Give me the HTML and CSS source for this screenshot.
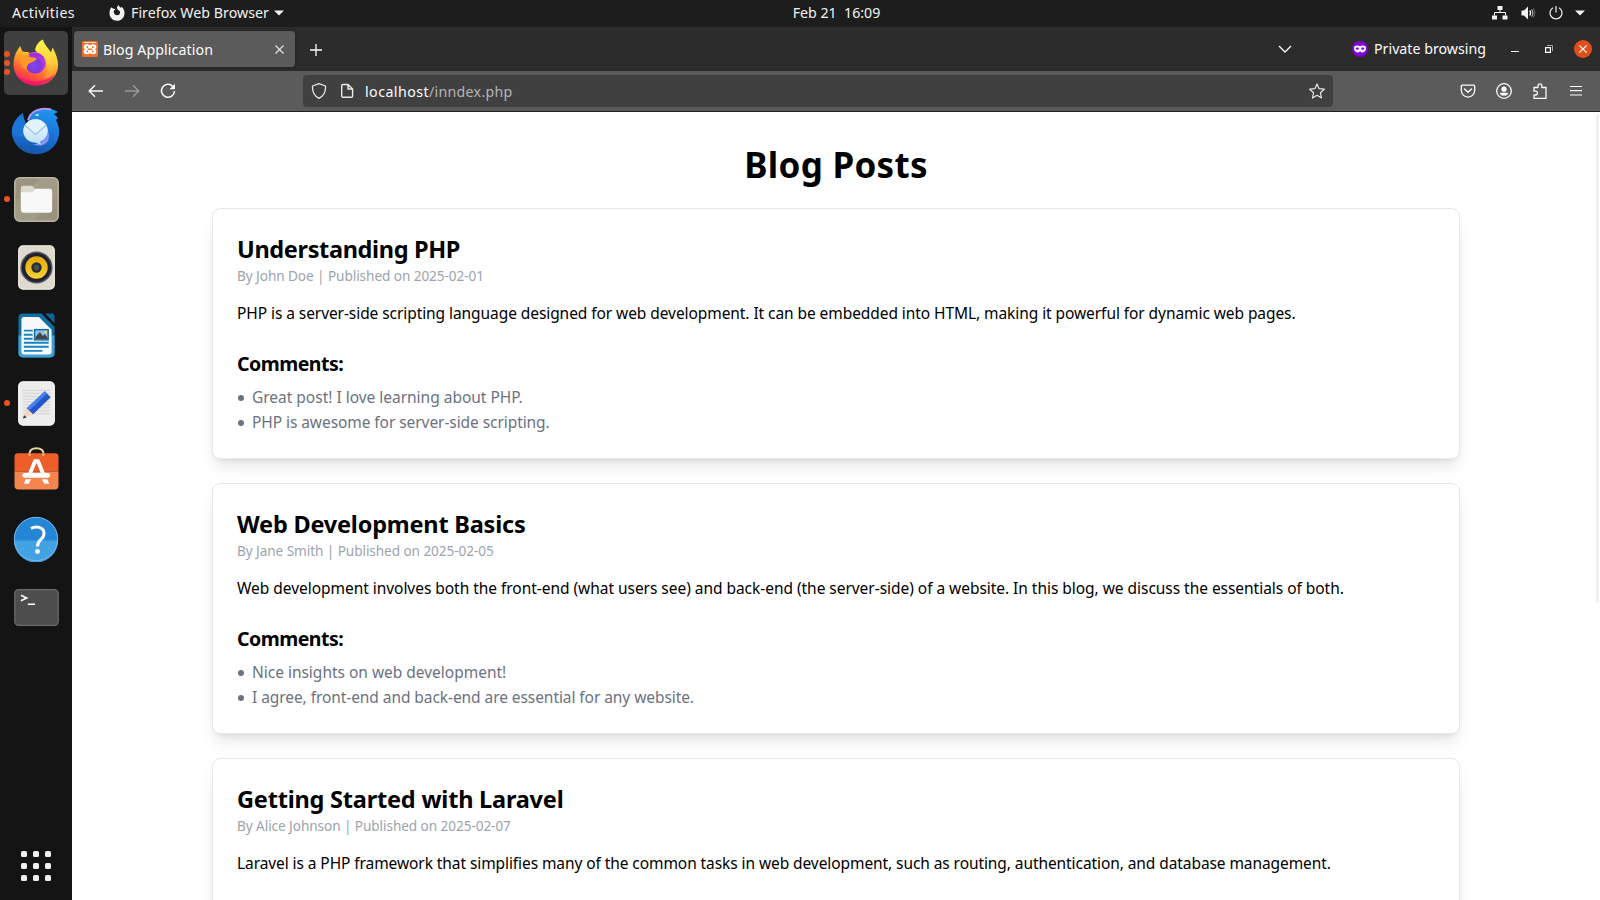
FILE: index.html
```html
<!DOCTYPE html>
<html lang="en">
<head>
<meta charset="utf-8">
<title>Blog Application</title>
<link rel="stylesheet" href="styles.css">
</head>
<body>
<div class="desktop">
  <header class="topbar">
    <div class="topbar-left">
      <span class="activities">Activities</span>
      <svg class="app-icon" width="16" height="16" viewBox="0 0 16 16"><path fill="#f2f2f2" d="M2.2 2.2C3 3 3.900 3.500 5 3.700C6 3.800 6.300 4.200 6.200 4.700L4.900 5.600C4.200 7.500 5.500 10.300 8 10.300C10.300 10.300 11.400 8.500 11 6.700C10.800 5.500 9 5.500 8.200 3.800C7.800 2.500 8.300 1.200 9.500 0C10 1.500 11 2 12 3L12.500 1.800C14.500 3.500 15.500 5.500 15.500 8.200C15.500 12.500 12.200 15.800 8 15.800C3.800 15.800.5 12.500.5 8.300C.5 6 1 4 2.200 2.200Z"/></svg>
      <span class="app-name">Firefox Web Browser</span>
      <svg width="10" height="6" viewBox="0 0 10 6"><path fill="#f2f2f2" d="M0 .5H10L5 5.500Z"/></svg>
    </div>
    <div class="clock">Feb 21&nbsp; 16:09</div>
    <div class="topbar-right">
      <svg width="16" height="14" viewBox="0 0 16 14"><path fill="#f2f2f2" d="M5.500 0h5v4h-5zM0 9.500h5V13.500H0zM10.500 9.500h5V13.500h-5z"/><path fill="none" stroke="#f2f2f2" d="M8 4v2.500M2.500 9.500v-3h11v3"/></svg>
      <svg width="16" height="14" viewBox="0 0 16 14"><path fill="#f2f2f2" d="M.5 4.500H3L7 .5v13L3 9.500H.5z"/><path fill="none" stroke="#f2f2f2" stroke-width="1.300" d="M8.700 4.500q1.800 2.500 0 5"/><path fill="none" stroke="#aaa" stroke-width="1.200" d="M10.500 3.300q2.800 3.700 0 7.400"/><path fill="none" stroke="#666" d="M12.500 2.300q3 4.700 0 9.400"/></svg>
      <svg width="14" height="14" viewBox="0 0 14 14"><path fill="none" stroke="#f2f2f2" stroke-width="1.200" d="M4 1.700a6 6 0 1 0 6 0M7 0v6.500"/></svg>
      <svg width="10" height="6" viewBox="0 0 10 6"><path fill="#f2f2f2" d="M0 .5H10L5 5.500Z"/></svg>
    </div>
  </header>

  <nav class="dock">
    <div class="dock-item active"><i class="dots three"><b></b><b></b><b></b></i>
      <svg class="firefox" width="46" height="47" viewBox="0 0 46 47">
        <defs>
          <linearGradient id="ffBody" x1=".75" y1=".1" x2=".3" y2="1"><stop offset="0" stop-color="#ffe83f"/><stop offset=".35" stop-color="#ffac2b"/><stop offset=".7" stop-color="#ff5b36"/><stop offset="1" stop-color="#f5156c"/></linearGradient>
          <radialGradient id="ffGlobe" cx=".4" cy=".6"><stop offset="0" stop-color="#7a4cf0"/><stop offset=".7" stop-color="#8135d8"/><stop offset="1" stop-color="#b23ae0"/></radialGradient>
          <linearGradient id="ffFlame" x1=".5" y1="0" x2=".6" y2="1"><stop offset="0" stop-color="#fff34f"/><stop offset=".6" stop-color="#ffcf3a"/><stop offset="1" stop-color="#ff8a30"/></linearGradient>
        </defs>
        <path fill="url(#ffBody)" d="M4 12C5 10 6 9 7 7L9.500 12.500L14 13L22 12L36 12C43 14 45 20 45 26C45 38 35 46.500 23 46.500C10 46.500.5 37 .5 25C.5 20 2 15 4 12Z"/>
        <path fill="#ee1470" opacity=".75" d="M2 34C9 44 31 46 42 35C36 49 10 51 2 34Z"/>
        <path fill="url(#ffFlame)" d="M30 .5C31 6 36 9 38 14L39.500 8.500C44 16 46 24 43 31C40 37 36 39 30 39C35 36 36 28 32 21C29 16 23 14 22 11C23 6 26 2 30 .5Z"/>
        <path fill="#404040" d="M14.500 12.300C17 11.300 20 11 22.300 11.500L24 13C20 13 18 13.500 16.500 14.500z"/>
        <circle cx="22.500" cy="24.500" r="10.300" fill="url(#ffGlobe)"/>
        <path fill="#a52be0" d="M15 16C20 11 28 13 32 20C28 17 24 17 21 18Z"/>
        <path fill="#ff9a26" d="M5 17C9 15 13 15.500 17 18L23.500 19C23.500 22 20 22.500 17 24C14 25.500 13.500 28 13.500 31C9 29 7 24 7 20Z"/>
      </svg>
    </div>
    <div class="dock-item">
      <svg class="thunderbird" width="49" height="48" viewBox="0 0 49 48">
        <defs><linearGradient id="tbBody" x1=".7" y1="0" x2=".5" y2="1"><stop offset="0" stop-color="#2196ef"/><stop offset=".6" stop-color="#1a70d6"/><stop offset="1" stop-color="#1457a8"/></linearGradient>
        <linearGradient id="tbMail" x1=".5" y1="0" x2=".5" y2="1"><stop offset="0" stop-color="#f2faff"/><stop offset="1" stop-color="#bfe3fb"/></linearGradient></defs>
        <path fill="#1b76d6" d="M12 6C5 10 0 19 .8 27C2 33 8 38 14 36L15 18C14 13 12 10 12 6Z"/>
        <path fill="url(#tbBody)" d="M17 13C19 5 27 1 34 1C39 1 42 2.500 47 5L43 7L47 11L45 13C50 22 49 32 43 39C35 49 18 50 8 41C3 36 1 30 1 25C5 31 10 31 15 26Z"/>
        <path fill="none" stroke="#b493f2" stroke-width="2" d="M17 13C20 4 29 0 40 2.500"/>
        <path fill="#8794f2" d="M22 37C31 37 36 32 37 24C41 34 33 42 22 37Z"/>
        <ellipse cx="24.500" cy="24" rx="12.300" ry="11.500" fill="url(#tbMail)"/>
        <path fill="#c5e4fb" d="M20 33L30 38L28 31Z"/>
        <path fill="#e4f3fd" d="M14 18L24.500 27L35 18A12 11 0 0 0 14 18z"/>
        <path fill="none" stroke="#9cc4e6" stroke-width="1.300" d="M14 18.500L24.500 27.500L35 18.500"/>
        <path fill="#d5ecff" d="M24 8q3-2 4 0q-2 2-4 0z"/>
      </svg>
    </div>
    <div class="dock-item"><i class="dots"><b></b></i>
      <svg width="45" height="45" viewBox="0 0 46 46">
        <rect x=".8" y=".8" width="44.400" height="44.400" rx="5" fill="#9b937f" stroke="#bbb5a4" stroke-width="1.500"/>
        <path fill="#aaa390" d="M2 26L26 2H42q2 0 2 2V20L20 44H4q-2 0-2-2z" opacity=".5"/>
        <path fill="#dedacb" d="M7 13V11.500q0-2.500 2.500-2.500h9l3.500 3.500H36V20H7z"/>
        <path fill="#f8f8f8" d="M7 15.500h12l3-3.500h14.500q2.500 0 2.500 2.500v19q0 3-3 3H10q-3 0-3-3z"/>
      </svg>
    </div>
    <div class="dock-item">
      <svg width="37" height="45" viewBox="0 0 38 46">
        <defs><linearGradient id="cone" x1="0" y1="0" x2="0" y2="1"><stop offset="0" stop-color="#e3a80a"/><stop offset="1" stop-color="#f7d13a"/></linearGradient></defs>
        <rect x=".7" y=".7" width="36.600" height="44.600" rx="4.500" fill="#dedace" stroke="#f0ede4" stroke-width="1.200"/>
        <circle cx="19" cy="23" r="16.500" fill="#55555f"/><circle cx="19" cy="23" r="15" fill="#20212d"/>
        <circle cx="19" cy="23" r="11.500" fill="url(#cone)"/><circle cx="19" cy="23" r="5.300" fill="#2b2b2b"/><circle cx="19" cy="23" r="3" fill="#454a4b"/>
      </svg>
    </div>
    <div class="dock-item">
      <svg width="37" height="45" viewBox="0 0 38 46">
        <path fill="#0e6fa6" d="M5 .5H24L37.500 14V41q0 4.500-4.500 4.500H5Q.5 45.500.5 41V5Q.5.500 5 .5z"/>
        <path fill="#3e9fd2" d="M.5 23h37v18q0 4.500-4.500 4.500H5Q.5 45.500.5 41z"/>
        <path fill="#f8f8f8" d="M6 4H21.500L34.500 17V39.500q0 3-3 3H6.500q-3 0-3-3V6.500Q3.500 4 6 4z"/>
        <path fill="#0b659b" d="M28 .5h7q2.500 0 2.500 2.500v7.500z"/>
        <path stroke="#1784bf" stroke-width="2" d="M6 18h9M6 22.200h9M6 26.400h9M6 30.500h25.500M6 34.600h25.500M6 38.800h19"/>
        <rect x="17" y="17" width="14" height="10.500" fill="#89c5ee" stroke="#146d9f" stroke-width="1.500"/>
        <path fill="#444" d="M18 26.500v-2l4.500-5l3 4l2-2l3 4v1z"/><circle cx="28.500" cy="19.500" r="1.500" fill="#ffd33a"/>
      </svg>
    </div>
    <div class="dock-item"><i class="dots"><b></b></i>
      <svg width="37" height="45" viewBox="0 0 38 46">
        <rect x=".7" y=".7" width="36.600" height="44.600" rx="4.500" fill="#ededed" stroke="#fafafa" stroke-width="1.200"/>
        <path stroke="#cfcfcf" d="M5 9.500h28M5 12.500h28M5 15.500h28M5 18.500h28M5 21.500h28M5 24.500h28M5 27.500h28M5 30.500h28M5 33.500h28"/>
        <path fill="#f6d8c0" d="M5 38.500L9 28l6.500 6z"/><path fill="#333" d="M5 38.500l1.300-3.500l2.700 2.300z"/>
        <path fill="#2357c7" d="M9 28L27.500 10.500L33.500 16.500L15.500 34z"/><path fill="#4a7ff0" d="M9 28L27.500 10.500l2.200 2.200L11.500 30.500z"/>
      </svg>
    </div>
    <div class="dock-item">
      <svg class="shift-up" width="45" height="43" viewBox="0 0 46 44">
        <path fill="none" stroke="#ecd6a4" stroke-width="2" d="M16 9C15 3 19 1.200 23 1.200S31 3 30 9"/>
        <path fill="#ee5e29" d="M4 6.500H42q3.500 0 3.500 3.500V25H.5V10Q.5 6.500 4 6.500z"/>
        <path fill="#f4854f" d="M.5 25h45v14.500q0 4-4 4h-37q-4 0-4-4z"/>
        <path fill="none" stroke="#ecd6a4" stroke-width="2" d="M16 9V7M30 9V7"/>
        <path fill="none" stroke="#fff" stroke-width="4" d="M16 28L21.500 14.500h3L30 28"/>
        <rect x="8.500" y="26.500" width="28.500" height="5" rx="2.500" fill="#fff"/>
        <path fill="#fff" d="M12 33h5.500L15 37.500h-5zM28.500 33H34l2 4.500h-5z"/>
      </svg>
    </div>
    <div class="dock-item">
      <svg width="46" height="46" viewBox="0 0 46 46">
        <circle cx="23" cy="23" r="22" fill="#2586d7"/><path fill="#43a2e2" d="M1 24.500h44a22 22 0 0 1-44 0z"/><circle cx="23" cy="23" r="21.700" fill="none" stroke="#71b8ec"/>
        <path fill="none" stroke="#fff" stroke-width="3" d="M18 12.500C23 9.500 31 11 31 17.500C31 24 24.500 23 24.500 30.500"/><circle cx="24.500" cy="35.500" r="2.400" fill="#fff"/>
      </svg>
    </div>
    <div class="dock-item">
      <svg width="45" height="37" viewBox="0 0 46 38">
        <rect x=".7" y=".7" width="44.600" height="36.600" rx="4" fill="#4d4d4d" stroke="#6c6c6c" stroke-width="1.300"/>
        <path fill="none" stroke="#fff" stroke-width="1.600" d="M7 6.500l6 2.700L7 12M14 15.700h7.500"/>
      </svg>
    </div>
    <div class="app-grid"><b></b><b></b><b></b><b></b><b></b><b></b><b></b><b></b><b></b></div>
  </nav>

  <section class="browser">
    <div class="tabstrip">
      <div class="tab">
        <svg width="16" height="16" viewBox="0 0 16 16"><rect width="16" height="16" rx="1.500" fill="#f0702c"/><path stroke="#ffd9c2" d="M2 1.500h12"/><path fill="#fff" d="M5 3.200C6.500 3.200 7.500 3.800 8 4.500C8.500 3.800 9.500 3.200 11 3.200C15 3.200 15 7 13 8.200C15 9.500 15 13.200 11 13.200C9.500 13.200 8.500 12.700 8 12C7.500 12.700 6.500 13.200 5 13.200C1 13.200 1 9.500 3 8.200C1 7 1 3.200 5 3.200Z"/><path stroke="#f0702c" stroke-width="1.500" stroke-linecap="round" d="M5.300 5.700v.7M10.700 5.700v.7M5.300 10v.7M10.700 10v.7M6.500 8.200h3"/></svg>
        <span class="tab-title">Blog Application</span>
        <svg width="9" height="9" viewBox="0 0 9 9"><path stroke="#e8e8e8" stroke-width="1.100" d="M.5.5l8 8M8.500.5l-8 8"/></svg>
      </div>
      <svg class="new-tab" width="12" height="12" viewBox="0 0 12 12"><path stroke="#fbfbfe" stroke-width="1.300" d="M6 0v12M0 6h12"/></svg>
      <svg class="all-tabs" width="14" height="8" viewBox="0 0 14 8"><path fill="none" stroke="#fbfbfe" stroke-width="1.300" d="M1 1l6 6l6-6"/></svg>
      <svg width="16" height="16" viewBox="0 0 16 16"><circle cx="8" cy="8" r="8" fill="#8000d7"/><path fill="#fff" d="M8 5.300C9.500 4.300 14 3.500 14 7C14 11.500 10 12.500 8 10.200C6 12.500 2 11.500 2 7C2 3.500 6.500 4.300 8 5.300Z"/><ellipse cx="5.300" cy="7.700" rx="1.600" ry="1.100" fill="#8000d7"/><ellipse cx="10.700" cy="7.700" rx="1.600" ry="1.100" fill="#8000d7"/></svg>
      <span class="private">Private browsing</span>
      <svg class="minimize" width="8" height="8" viewBox="0 0 8 8"><path stroke="#f2f2f2" d="M0 6.500h8"/></svg>
      <svg class="restore" width="8" height="8" viewBox="0 0 8 8"><path fill="none" stroke="#a8a8a8" d="M2 .5h5.500V6"/><path fill="none" stroke="#fff" stroke-width="1.200" d="M.6 2.600h4.800v4.800H.6z"/></svg>
      <svg width="18" height="18" viewBox="0 0 18 18"><circle cx="9" cy="9" r="9" fill="#e04e1b"/><path stroke="#fff" stroke-width="1.200" d="M5.300 5.300l7.400 7.400M12.700 5.300l-7.400 7.400"/></svg>
    </div>
    <div class="toolbar">
      <div class="nav-buttons">
        <svg width="16" height="14" viewBox="0 0 16 14"><path fill="none" stroke="#fbfbfe" stroke-width="1.500" stroke-linejoin="round" d="M15 7H1.500M7 1.200L1.200 7L7 12.800"/></svg>
        <svg width="16" height="14" viewBox="0 0 16 14"><path fill="none" stroke="#989898" stroke-width="1.500" stroke-linejoin="round" d="M1 7h13.500M9 1.200L14.800 7L9 12.800"/></svg>
        <svg width="16" height="16" viewBox="0 0 16 16"><path fill="none" stroke="#fbfbfe" stroke-width="1.500" d="M12.800 3.400A6.500 6.500 0 1 0 14.500 8"/><path fill="#fbfbfe" d="M15 .8V6.300H9.500z"/></svg>
      </div>
      <div class="urlbar">
        <svg width="16" height="16" viewBox="0 0 16 16"><path fill="none" stroke="#e8e8e8" stroke-width="1.300" stroke-linejoin="round" d="M8 .7L14.500 3C14.800 9 12.500 13.200 8 15.300C3.500 13.200 1.200 9 1.500 3z"/></svg>
        <svg width="14" height="16" viewBox="0 0 14 16"><path fill="none" stroke="#e8e8e8" stroke-width="1.400" stroke-linejoin="round" d="M8 1.500H3q-1.300 0-1.300 1.300V13q0 1.300 1.300 1.300h8.300q1.300 0 1.300-1.300V6zM8 1.500V6h4.600"/></svg>
        <span class="url"><span class="host">localhost</span><span class="path">/inndex.php</span></span>
        <svg class="star" width="16" height="16" viewBox="0 0 16 16"><path fill="none" stroke="#e8e8e8" stroke-width="1.200" stroke-linejoin="round" d="M8 .9L10.100 5.700L15.300 6.200L11.400 9.700L12.500 15L8 12.300L3.500 15L4.600 9.700L.7 6.200L5.900 5.700z"/></svg>
      </div>
      <div class="tools">
        <svg width="16" height="16" viewBox="0 0 16 16"><path fill="none" stroke="#fbfbfe" stroke-width="1.300" d="M2.500 2.200h11q1.200 0 1.200 1.200v4a6.700 6.700 0 0 1-13.400 0v-4q0-1.200 1.200-1.200z"/><path fill="none" stroke="#fbfbfe" stroke-width="1.400" stroke-linecap="round" stroke-linejoin="round" d="M4.500 6L8 9.300L11.500 6"/></svg>
        <svg width="16" height="16" viewBox="0 0 16 16"><circle cx="8" cy="8" r="7.300" fill="none" stroke="#fbfbfe" stroke-width="1.300"/><circle cx="8" cy="6.200" r="2.600" fill="#fbfbfe"/><path fill="#fbfbfe" d="M3.800 9.800h8.400q0 3-4.200 3t-4.200-3z"/></svg>
        <svg width="16" height="16" viewBox="0 0 16 16"><path fill="none" stroke="#fbfbfe" stroke-width="1.300" stroke-linejoin="round" d="M2 4.500H6V2.800a1.900 1.900 0 0 1 3.800 0V4.500H14V15.300H2V12H3.500a1.900 1.900 0 0 0 0-3.800H2z"/></svg>
        <svg class="menu" width="12" height="16" viewBox="0 0 12 16"><path stroke="#fbfbfe" stroke-width="1.200" d="M0 3.500h12M0 7.700h12M0 12h12"/></svg>
      </div>
    </div>

    <main class="page">
      <div class="container">
        <h1>Blog Posts</h1>
        <article class="post">
          <h2 class="title-php">Understanding PHP</h2>
          <p class="meta">By John Doe | Published on 2025-02-01</p>
          <p class="body body-php">PHP is a server-side scripting language designed for web development. It can be embedded into HTML, making it powerful for dynamic web pages.</p>
          <h3>Comments:</h3>
          <ul>
            <li class="snug">Great post! I love learning about PHP.</li>
            <li>PHP is awesome for server-side scripting.</li>
          </ul>
        </article>
        <article class="post">
          <h2>Web Development Basics</h2>
          <p class="meta">By Jane Smith | Published on 2025-02-05</p>
          <p class="body body-web">Web development involves both the front-end (what users see) and back-end (the server-side) of a website. In this blog, we discuss the essentials of both.</p>
          <h3>Comments:</h3>
          <ul>
            <li class="snug">Nice insights on web development!</li>
            <li>I agree, front-end and back-end are essential for any website.</li>
          </ul>
        </article>
        <article class="post">
          <h2>Getting Started with Laravel</h2>
          <p class="meta">By Alice Johnson | Published on 2025-02-07</p>
          <p class="body body-laravel">Laravel is a PHP framework that simplifies many of the common tasks in web development, such as routing, authentication, and database management.</p>
        </article>
      </div>
      <div class="scrollbar"></div>
    </main>
  </section>
</div>
</body>
</html>
```
FILE: styles.css
```css
* { box-sizing: border-box; }
body, h1, h2, h3, p, ul { margin: 0; padding: 0; }
svg { display: block; flex: none; }
body {
  overflow: hidden;
  font-family: "Noto Sans", sans-serif;
  background: #fff;
  color: #000;
}
.desktop {
  display: grid;
  grid-template: 27px 873px / 72px 1528px;
  width: 1600px;
  height: 900px;
  overflow: hidden;
}

/* System bar */
.topbar {
  grid-column: 1 / 3;
  display: grid;
  grid-template-columns: 1fr auto 1fr;
  align-items: center;
  padding-bottom: 1px;
  background: #1d1d1d;
  color: #f2f2f2;
  font-size: 14.200px;
  line-height: 26px;
  white-space: nowrap;
}
.topbar-left { display: flex; align-items: center; padding-left: 12px; }
.activities { width: 97px; letter-spacing: .389px; }
.app-icon { margin-right: 6px; }
.app-name { margin-right: 5px; letter-spacing: .042px; }
.clock { padding-left: 73px; }
.topbar-right { display: flex; justify-content: flex-end; align-items: center; gap: 13px; padding-right: 15px; }
.topbar-right svg:nth-child(3) { margin-right: -1px; }
.topbar-right svg:nth-child(2) { margin-right: -1px; }

/* Launcher */
.dock {
  display: flex;
  flex-direction: column;
  align-items: center;
  gap: 4px;
  padding: 4px 0 19px;
  background: #141414;
}
.dock-item {
  position: relative;
  display: flex;
  align-items: center;
  justify-content: center;
  flex: none;
  width: 64px;
  height: 64px;
  border-radius: 5px;
}
.dock-item.active { background: #404040; }
.firefox { margin-bottom: 2px; }
.thunderbird { margin: 0 1px 0 0; }
.shift-up { margin-top: -6px; }
.dots { position: absolute; left: 0; top: 29px; display: grid; gap: 3px; }
.dots b { width: 6px; height: 6px; border-radius: 50%; background: #e95420; }
.dots.three { top: 20px; }
.app-grid {
  display: grid;
  grid-template-columns: repeat(3, 6px);
  gap: 6px;
  margin-top: auto;
}
.app-grid b { width: 6px; height: 6px; border-radius: 1.500px; background: #f0f0ee; }

/* Browser window */
.browser { display: grid; grid-template-rows: 44px 41px 788px; min-width: 0; }
.tabstrip {
  display: flex;
  align-items: center;
  padding: 0 8px 0 2px;
  background: #2c2c2c;
  color: #fbfbfe;
  font-size: 14.200px;
  line-height: 20px;
  white-space: nowrap;
}
.tab {
  display: flex;
  align-items: center;
  width: 221px;
  height: 36px;
  padding: 0 11px 0 8px;
  border-radius: 4px;
  background: #5b5b5b;
  box-shadow: 0 0 3px rgba(0, 0, 0, .35);
}
.tab-title { flex: 1; padding: 1px 0 0 5px; letter-spacing: .086px; }
.new-tab { margin-left: 15px; margin-top: 1px; }
.all-tabs { margin-left: auto; margin-right: 60px; }
.private { margin-left: 6px; letter-spacing: .014px; }
.minimize { margin-left: 25px; }
.restore { margin: 0 21px 0 26px; }
.toolbar {
  display: flex;
  align-items: center;
  padding-right: 18px;
  background: #5b5b5b;
  border-bottom: 1px solid #202020;
}
.nav-buttons { display: flex; align-items: center; gap: 20px; width: 231px; padding-left: 16px; }
.urlbar {
  display: flex;
  align-items: center;
  width: 1030px;
  height: 32px;
  padding: 0 8px;
  border-radius: 4px;
  background: #404040;
}
.urlbar svg + svg { margin-left: 13px; }
.url { flex: 1; padding: 2px 0 0 11px; font-size: 14.200px; line-height: 20px; }
.host { color: #fbfbfe; letter-spacing: .451px; }
.path { color: #b5b5b7; letter-spacing: .278px; }
.tools { display: flex; align-items: center; gap: 20px; margin-left: auto; }
.menu { margin-left: 2px; }

/* Blog page */
.page { position: relative; overflow: hidden; background: #fff; }
.container { width: 1248px; margin: 0 auto; padding-top: 33px; }
h1 {
  margin-bottom: 23px;
  font-size: 35px;
  line-height: 40px;
  text-align: center;
  letter-spacing: .276px;
}
.post {
  height: 251px;
  margin-bottom: 24px;
  padding: 24px;
  border: 1px solid #e5e7eb;
  border-radius: 8px;
  background: #fff;
  box-shadow: 0 10px 15px -3px rgba(0, 0, 0, .1), 0 4px 6px -4px rgba(0, 0, 0, .1);
}
h2 { font-size: 23.500px; line-height: 32px; letter-spacing: -.202px; }
.title-php { letter-spacing: -.356px; }
.meta { margin-top: 1px; color: #9ca3af; font-size: 13.600px; line-height: 20px; letter-spacing: -.07px; }
.body { margin-top: 15px; font-size: 15.500px; line-height: 24px; white-space: nowrap; }
.body-php { letter-spacing: -.073px; }
.body-web { letter-spacing: -.038px; }
.body-laravel { letter-spacing: -.082px; }
h3 { margin-top: 25px; font-size: 19.500px; line-height: 28px; letter-spacing: -.5px; }
ul { margin-top: 7px; list-style: none; color: #6b7280; font-size: 15.500px; line-height: 25px; }
li { display: flex; align-items: center; letter-spacing: -.07px; }
li.snug { letter-spacing: -.015px; }
li::before {
  content: "";
  width: 6px;
  height: 6px;
  margin: 1px 8px 0 1px;
  border-radius: 50%;
  background: #6b7280;
}
.scrollbar {
  position: absolute;
  top: 2px;
  right: 1px;
  width: 3px;
  height: 489px;
  border-radius: 2px;
  background: #f0f0f0;
}
```
